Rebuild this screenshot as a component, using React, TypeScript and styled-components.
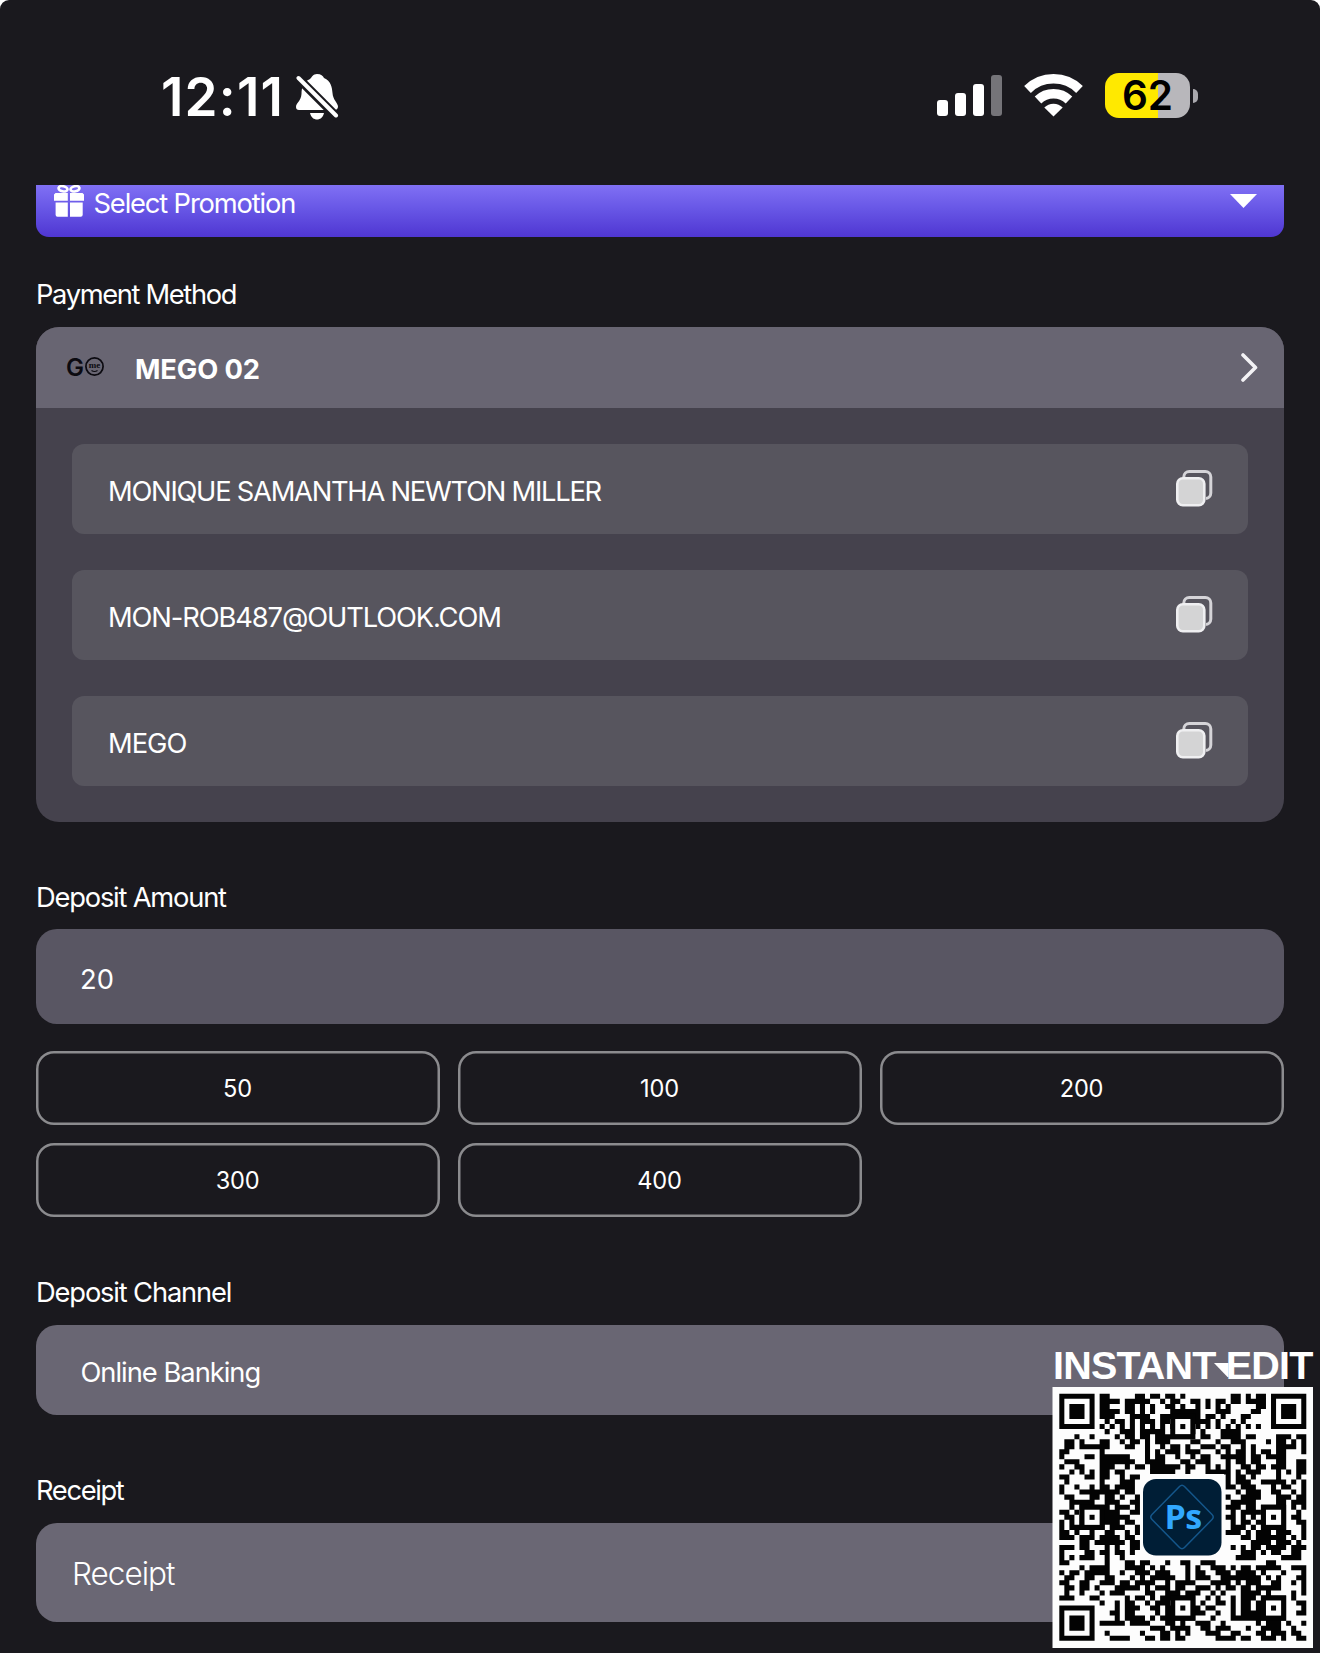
import React from 'react';
import styled, { createGlobalStyle } from 'styled-components';

const Global = createGlobalStyle`
  *, *::before, *::after { box-sizing: border-box; }
  html, body { margin: 0; padding: 0; background: #fff; }
`;

const Screen = styled.main`
  width: 1320px;
  height: 1653px;
  position: relative;
  overflow: hidden;
  display: flex;
  flex-direction: column;
  background: #1a191e;
  border-radius: 9px 9px 0 0;
  color: #fff;
  font-family: Inter, 'Liberation Sans', sans-serif;
`;

const StatusBar = styled.header`
  height: 185px;
  flex: none;
  display: flex;
  align-items: flex-start;
  justify-content: space-between;
  padding: 73px 122px 0 161px;
`;

const StatusGroup = styled.div`
  display: flex;
  align-items: flex-start;
`;

const Clock = styled.time`
  width: 135px;
  font-size: 53px;
  line-height: 49px;
  font-weight: 600;
  letter-spacing: 1.2px;
  white-space: nowrap;
`;

const Signal = styled.div`
  display: flex;
  align-items: flex-end;
  gap: 7px;
  height: 43px;
  margin-right: 22px;
`;

const SignalBar = styled.i<{ $h: number; $off?: boolean }>`
  width: 11px;
  height: ${(p) => p.$h}px;
  border-radius: 3px;
  background: ${(p) => (p.$off ? '#757479' : '#fff')};
`;

const Battery = styled.div`
  width: 85px;
  height: 45px;
  margin-left: 22px;
  border-radius: 14px;
  background: linear-gradient(90deg, #ffe900 0 53px, #b8b7bb 53px);
  color: #000;
  font-size: 40.5px;
  line-height: 46px;
  font-weight: 600;
  letter-spacing: 0;
  text-align: center;
`;

const BatteryCap = styled.i`
  width: 5px;
  height: 14px;
  margin: 16px 0 0 3px;
  border-radius: 0 6px 6px 0;
  background: #aaa9ae;
`;

const Content = styled.div`
  display: flex;
  flex-direction: column;
  padding: 0 36px;
`;

const PromoBar = styled.div`
  height: 52px;
  display: flex;
  align-items: flex-start;
  justify-content: space-between;
  padding: 0 27px 0 18px;
  border-radius: 0 0 13px 13px;
  background: linear-gradient(#8070f4, #6857e6 45%, #4f36d2);
`;

const PromoTitle = styled.div`
  display: flex;
  gap: 9.5px;
`;

const Txt = styled.span<{ $size?: number; $ls?: number; $w?: number; $dy?: number }>`
  font-size: ${(p) => p.$size ?? 27.3}px;
  line-height: 36px;
  font-weight: ${(p) => p.$w ?? 400};
  letter-spacing: ${(p) => p.$ls ?? 0}px;
  padding-top: ${(p) => p.$dy ?? 0}px;
  white-space: nowrap;
`;

const Caret = styled.i<{ $top: number; $half?: boolean }>`
  width: 27px;
  height: 14px;
  margin-top: ${(p) => p.$top}px;
  background: #fff;
  clip-path: ${(p) => (p.$half ? 'polygon(0 0, 54% 0, 54% 100%, 50% 100%)' : 'polygon(0 0, 100% 0, 50% 100%)')};
`;

const Label = styled.h2<{ $top: number; $ls: number }>`
  margin: ${(p) => p.$top}px 0 14.5px;
  height: 36px;
  font-size: 27.3px;
  line-height: 37px;
  font-weight: 400;
  letter-spacing: ${(p) => p.$ls}px;
  white-space: nowrap;
`;

const Panel = styled.section`
  height: 495px;
  border-radius: 23px;
  overflow: hidden;
  background: #45424d;
`;

const PanelHead = styled.div`
  height: 81px;
  display: flex;
  align-items: center;
  padding: 0 26px 0 31px;
  background: #686572;
`;

const HeadName = styled.div`
  flex: 1;
  padding: 5px 0 0 30px;
  display: flex;
`;

const PanelBody = styled.div`
  display: flex;
  flex-direction: column;
  gap: 36px;
  padding: 36px;
`;

const CopyRow = styled.div`
  height: 90px;
  display: flex;
  align-items: center;
  justify-content: space-between;
  padding: 0 35px 0 36px;
  border-radius: 12px;
  background: #57555e;
`;

const Field = styled.div<{ $h: number; $bg: string; $pad: number }>`
  height: ${(p) => p.$h}px;
  display: flex;
  align-items: center;
  justify-content: space-between;
  padding: 0 43px 0 ${(p) => p.$pad}px;
  border-radius: 21px;
  background: ${(p) => p.$bg};
`;

const AmountGrid = styled.div`
  display: grid;
  grid-template-columns: repeat(3, 1fr);
  grid-auto-rows: 74.5px;
  gap: 17.5px 18px;
  margin-top: 27px;
`;

const AmountButton = styled.button`
  border: 0;
  box-shadow: inset 0 0 0 2.5px #8b8b8e;
  border-radius: 18px;
  background: transparent;
  color: #fff;
  padding: 3px 1px 0 0;
  font: 400 23.6px/30px Inter, 'Liberation Sans', sans-serif;
  letter-spacing: -0.2px;
`;

const Stamp = styled.aside`
  position: absolute;
  left: 1052px;
  top: 1346px;
  width: 262px;
  display: flex;
  flex-direction: column;
`;

const StampTitle = styled.div`
  height: 41px;
  padding-left: 1px;
  font: 700 39.5px/39px 'Liberation Sans', Arial, sans-serif;
  letter-spacing: -0.8px;
  white-space: nowrap;
`;

const StatusSvg = styled.svg`
  margin-top: 1px;
`;

const LogoSvg = styled.svg`
  overflow: visible;
`;

const Bell = () => (
  <StatusSvg width="43" height="47" viewBox="0 0 43 47">
    <path fill="#fff" d="M14 5C16 3 17 0 21 0s6 2 7 4c7 3 8 9 8.500 15 .4 7 5.500 10 5.500 13.500 0 2-1.500 3.500-3 3.500H3c-2 0-3-1-3-3 0-4 5-6 5.500-13C5.700 13 7 8 14 5z" />
    <path fill="#fff" d="M14 39h14c-1 4.500-4 6.500-7 6.500S15 43.500 14 39z" />
    <path stroke="#1a191e" strokeWidth="9" d="M-1 1 42 44" />
    <path stroke="#fff" strokeWidth="4" strokeLinecap="round" d="M2.500 4 40 41.500" />
  </StatusSvg>
);

const Wifi = () => (
  <StatusSvg width="59" height="43" viewBox="0 0 59 43">
    <g fill="none" stroke="#fff" strokeWidth="9.500">
      <path d="M3.500 15.500a37 37 0 0 1 52 0" />
      <path d="M14 26a22.500 22.500 0 0 1 31 0" />
    </g>
    <path fill="#fff" d="M29.500 42.500 20.300 33.500a13 13 0 0 1 18.400 0z" />
  </StatusSvg>
);

const Gift = () => (
  <svg width="30" height="32" viewBox="0 0 30 32" fill="#fff">
    <g fill="none" stroke="#fff" strokeWidth="2.600">
      <ellipse cx="9" cy="3.800" rx="4.500" ry="2.600" transform="rotate(12 9 3.800)" />
      <ellipse cx="21" cy="3.800" rx="4.500" ry="2.600" transform="rotate(-12 21 3.800)" />
    </g>
    <path d="M1.500 8h12.300v7.700H0V9.500zM16 8h12.500L30 9.500v6.200H16zM1.600 17.500h12.200V31.700H3.500q-1.900 0-1.900-2zM16 17.500h12.700v12.200q0 2-2 2H16z" />
  </svg>
);

const GoLogo = () => (
  <LogoSvg width="38" height="24" viewBox="0 0 38 24">
    <text x="-1" y="20.500" fontFamily="Inter, sans-serif" fontWeight="600" fontSize="24" fill="#0b0a10">G</text>
    <circle cx="27.500" cy="11.500" r="8.600" fill="none" stroke="#0b0a10" strokeWidth="1.700" />
    <text x="27.500" y="13" textAnchor="middle" fontFamily="Liberation Serif, serif" fontWeight="700" fontSize="9" fill="#0b0a10">me</text>
    <path d="M24.500 15.500q3 2 6 0" fill="none" stroke="#0b0a10" strokeWidth="1.100" />
  </LogoSvg>
);

const Chevron = () => (
  <svg width="17" height="29" viewBox="0 0 17 29" fill="none">
    <path d="M2 2 14.500 14.500 2 27" stroke="#f3f2f5" strokeWidth="3.600" strokeLinecap="round" strokeLinejoin="round" />
  </svg>
);

const CopyIcon = () => (
  <svg width="37" height="37" viewBox="0 0 37 37">
    <rect x="7.800" y="1.500" width="27" height="27" rx="5.500" fill="none" stroke="#d5d4d8" strokeWidth="3" />
    <rect x="0" y="7" width="30" height="30" rx="6.500" fill="#57555e" />
    <rect x="1.300" y="8.300" width="27" height="27" rx="5.500" fill="#d4d4d5" stroke="#efeff1" strokeWidth="2.600" />
  </svg>
);

/* Left 25 columns of each code row. */
const LEFT = [
  '1111111011000001101101101', '1000001011110111110010110', '1011101011000110101001101',
  '1011101011110110101000111', '1011101011100011110011111', '1000001001011010111011000',
  '1111111010101010101010101', '0000000001001110111110000', '0001001000010110110111111',
  '0110100011001011010111000', '0110111111000110010010110', '1100000010000000010101110',
  '1000011011111100010110010', '0111000011111110011110001', '1001100011100101101111110',
  '0010101011011000001111100', '1100011011001011000000000', '0100000010001110000000000',
  '1001001011011110000000000', '1000111111110110000000000', '0110001101101001000000000',
  '0011111001110011000000000', '0010111111011101000000000', '1101000111110011000000000',
  '0110101011111100000000000', '1010100111110110000000000', '1011111110111001000000000',
  '1101001001100101000000000', '1110111011110110000000000', '0000110111111011000000000',
  '1110110001010011000000000', '1000011011011010000000000', '1010111001001000000000000',
  '1100000001000110110001001', '0000101111000111101010000', '1011011111001001110111000',
  '0110011001100010101111100', '1100110011101101111001011', '0110110100011111010111011',
  '0100100010111000011001110', '1110001100000101101011111', '0000000010010110010111000',
  '1111111000010111001101101', '1000001000110110000101100', '1011101000010111101011111',
  '1011101011111011110001101', '1011101000000000001110111', '1000001001000000100011010',
  '1111111000111100011011011',
];

/* Right 24 columns. */
const RIGHT = [
  '000000000110101101111111', '011010110110111101000001', '001010101000001101011101',
  '111000111000011001011101', '111011010001100001011101', '011110100101000001000001',
  '101010101010101001111111', '110100011110000000000000', '100110011110110000111011',
  '011000100111000010110101', '100111011001010000111101', '111000101011010110110001',
  '010110011111011011110000', '101110001011011000110011', '110010101001101101110011',
  '100011111010111000101011', '000000001011010000100010', '000000001011100111110101',
  '000000001101110001011001', '000000000010111001100101', '000000001001111000111011',
  '000000000111110000110111', '000000001110110111110101', '000000000101111000110010',
  '000000001101010101010110', '000000000101101100110011', '000000000111010111110001',
  '000000001110101110111001', '000000000001101111110101', '000000000000011110111010',
  '000000000101011011110111', '000000000001110101100110', '000000000011110000011110',
  '100111000000000011000000', '101001110101101111100111', '101100111011110100010001',
  '101110011111111010100011', '110001111010111001100101', '001110101101101111100001',
  '111001010001111010000101', '110010100101110111110100', '010100110101101100010011',
  '011011000101101101010001', '011100100101111100010011', '110001000111111111110000',
  '001110010000001011101001', '100110111000100111100100', '100011100110001101110110',
  '000000111101100111010011',
];

const CELL = 247 / 49;

/* Merge consecutive dark modules of a row into one run. */
const modules = LEFT.map((left, y) => {
  const row = left + RIGHT[y];
  let d = '';
  for (let x = 0; x < row.length; x++) {
    if (row[x] !== '1') continue;
    let end = x;
    while (row[end] === '1') end++;
    d += `M${x} ${y}h${end - x}v1h-${end - x}z`;
    x = end;
  }
  return d;
}).join('');

const QrCode = () => (
  <svg width="262" height="262" viewBox="0 0 262 262">
    <rect x=".5" y="0" width="260.500" height="261" fill="#fdfdfd" />
    <path d={modules} fill="#030303" transform={`translate(7.300 6.800) scale(${CELL})`} />
    {[[24, 6], [6, 24], [42, 24], [24, 42], [42, 42]].map(([x, y]) => (
      <g key={`${x}-${y}`} transform={`translate(7.300 6.800) scale(${CELL})`}>
        <rect x={x - 2} y={y - 2} width="5" height="5" fill="#030303" />
        <rect x={x - 1} y={y - 1} width="3" height="3" fill="#fdfdfd" />
        <rect x={x} y={y} width="1" height="1" fill="#030303" />
      </g>
    ))}
    <rect x="88" y="87" width="84" height="84" fill="#fdfdfd" />
    <rect x="91" y="92" width="78.500" height="76.500" rx="13" fill="#001e36" />
    <path d="M127.500 99.500q2.500-2.500 5 0l27.500 28q2.500 2.500 0 5l-27.500 28q-2.500 2.500-5 0l-27.500-28q-2.500-2.500 0-5z" fill="none" stroke="#14568a" strokeWidth="1.500" />
    <text x="131" y="142" textAnchor="middle" fontFamily="Open Sans, sans-serif" fontWeight="700" fontSize="34" letterSpacing="-.5" fill="#31a8ff">Ps</text>
  </svg>
);

const BARS = [{ h: 16 }, { h: 23 }, { h: 32 }, { h: 41, off: true }];
const DETAILS = [
  { text: 'MONIQUE SAMANTHA NEWTON MILLER', ls: -1.24 },
  { text: 'MON-ROB487@OUTLOOK.COM', ls: -1.1 },
  { text: 'MEGO', ls: -1 },
];

export default function App() {
  return (
    <>
      <Global />
      <Screen>
        <StatusBar>
          <StatusGroup>
            <Clock>12:11</Clock>
            <Bell />
          </StatusGroup>
          <StatusGroup>
            <Signal>
              {BARS.map((b) => <SignalBar key={b.h} $h={b.h} $off={b.off} />)}
            </Signal>
            <Wifi />
            <Battery>62</Battery>
            <BatteryCap />
          </StatusGroup>
        </StatusBar>
        <Content>
          <PromoBar>
            <PromoTitle>
              <Gift />
              <Txt $ls={-1.15} $dy={1}>Select Promotion</Txt>
            </PromoTitle>
            <Caret $top={9} />
          </PromoBar>
          <Label $top={39} $ls={-1.35}>Payment Method</Label>
          <Panel>
            <PanelHead>
              <GoLogo />
              <HeadName><Txt $w={700} $ls={-0.1}>MEGO 02</Txt></HeadName>
              <Chevron />
            </PanelHead>
            <PanelBody>
              {DETAILS.map((d) => (
                <CopyRow key={d.text}>
                  <Txt $dy={6} $ls={d.ls}>{d.text}</Txt>
                  <CopyIcon />
                </CopyRow>
              ))}
            </PanelBody>
          </Panel>
          <Label $top={57} $ls={-1.2}>Deposit Amount</Label>
          <Field $h={94.5} $bg="#595663" $pad={44}><Txt $dy={7} $ls={0}>20</Txt></Field>
          <AmountGrid>
            {[50, 100, 200, 300, 400].map((n) => <AmountButton key={n}>{n}</AmountButton>)}
          </AmountGrid>
          <Label $top={57} $ls={-1.15}>Deposit Channel</Label>
          <Field $h={90} $bg="#696673" $pad={44.5}>
            <Txt $dy={7} $ls={-1}>Online Banking</Txt>
            <Caret $top={1} $half />
          </Field>
          <Label $top={57.5} $ls={-1.35}>Receipt</Label>
          <Field $h={99} $bg="#6a6774" $pad={36}><Txt $size={31.5} $w={300} $ls={-1} $dy={3}>Receipt</Txt></Field>
        </Content>
        <Stamp>
          <StampTitle>INSTANT EDIT</StampTitle>
          <QrCode />
        </Stamp>
      </Screen>
    </>
  );
}
